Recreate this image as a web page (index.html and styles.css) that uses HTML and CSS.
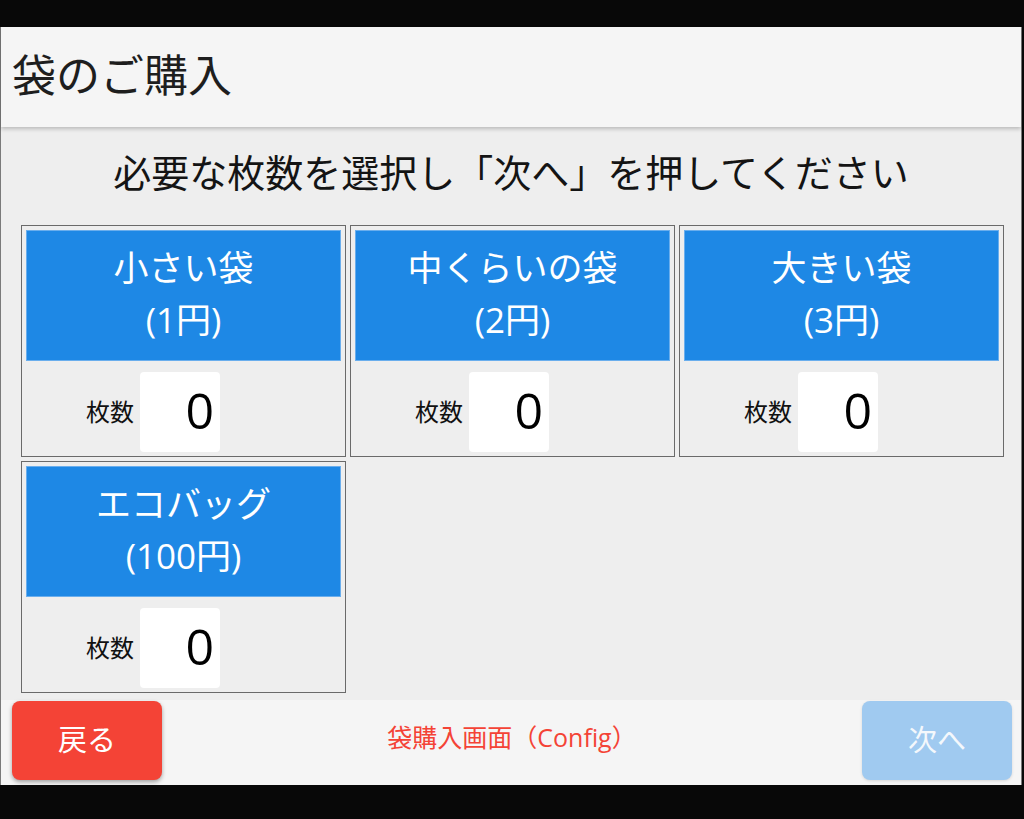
FILE: index.html
```html
<!DOCTYPE html>
<html lang="ja">
<head>
<meta charset="utf-8">
<title>袋のご購入</title>
<link rel="stylesheet" href="styles.css">
</head>
<body>
<div class="window">
  <header class="header">
    <h1 class="title">袋のご購入</h1>
  </header>
  <main class="main">
    <p class="instruction">必要な枚数を選択し「次へ」を押してください</p>
    <div class="grid">
      <section class="card">
        <div class="card-head">
          <span class="card-line">小さい袋</span>
          <span class="card-line">(1円)</span>
        </div>
        <div class="qty-row">
          <span class="qty-label">枚数</span>
          <span class="qty-box">0</span>
        </div>
      </section>
      <section class="card">
        <div class="card-head">
          <span class="card-line">中くらいの袋</span>
          <span class="card-line">(2円)</span>
        </div>
        <div class="qty-row">
          <span class="qty-label">枚数</span>
          <span class="qty-box">0</span>
        </div>
      </section>
      <section class="card">
        <div class="card-head">
          <span class="card-line">大きい袋</span>
          <span class="card-line">(3円)</span>
        </div>
        <div class="qty-row">
          <span class="qty-label">枚数</span>
          <span class="qty-box">0</span>
        </div>
      </section>
      <section class="card">
        <div class="card-head">
          <span class="card-line">エコバッグ</span>
          <span class="card-line">(100円)</span>
        </div>
        <div class="qty-row">
          <span class="qty-label">枚数</span>
          <span class="qty-box">0</span>
        </div>
      </section>
    </div>
  </main>
  <footer class="footer">
    <button class="btn btn-back" type="button">戻る</button>
    <span class="screen-name">袋購入画面（Config）</span>
    <button class="btn btn-next" type="button" disabled>次へ</button>
  </footer>
</div>
</body>
</html>
```

FILE: styles.css
```css
html, body {
  margin: 0;
  padding: 0;
}

body {
  background: #080808;
  height: 819px;
  overflow: hidden;
  font-family: "Open Sans", "Noto Sans CJK JP", sans-serif;
}

.window {
  margin-top: 27px;
  width: 1020px;
  height: 758px;
  border-left: 1px solid #7a7a7a;
  border-right: 1px solid #7a7a7a;
  background: #eeeeee;
  display: flex;
  flex-direction: column;
}

.header {
  height: 100px;
  flex: none;
  background: #f5f5f5;
  box-shadow: 0 2px 4px rgba(0, 0, 0, 0.22);
  position: relative;
  z-index: 1;
  display: flex;
  align-items: center;
}

.title {
  margin: 0 0 4px 11px;
  font-size: 44px;
  font-weight: 400;
  color: #1e1e1e;
  line-height: 56px;
}

.main {
  flex: 1;
  display: flex;
  flex-direction: column;
}

.instruction {
  margin: 20px 0 0;
  height: 50px;
  line-height: 50px;
  text-align: center;
  font-size: 38px;
  color: #141414;
}

.grid {
  margin-top: 28px;
  padding-left: 20px;
  display: grid;
  grid-template-columns: repeat(3, 325px);
  column-gap: 4px;
  row-gap: 4px;
}

.card {
  box-sizing: border-box;
  height: 232px;
  border: 1px solid #6a6a6a;
  padding: 4px;
  display: flex;
  flex-direction: column;
}

.card-head {
  box-sizing: border-box;
  height: 131px;
  background: #1e88e5;
  border: 1px solid #6aaeed;
  color: #ffffff;
  display: flex;
  flex-direction: column;
  align-items: center;
  justify-content: center;
  padding-bottom: 3px;
}

.card-line {
  font-size: 35px;
  line-height: 52px;
}

.qty-row {
  margin-top: 11px;
  padding-left: 60px;
  display: flex;
  align-items: center;
  gap: 6px;
}

.qty-label {
  font-size: 24px;
  color: #111;
  line-height: 30px;
}

.qty-box {
  box-sizing: border-box;
  width: 80px;
  height: 80px;
  background: #ffffff;
  border-radius: 4px;
  padding-right: 6px;
  text-align: right;
  font-size: 50px;
  line-height: 76px;
  color: #000;
}

.footer {
  height: 85px;
  flex: none;
  box-sizing: border-box;
  background: #f5f5f5;
  padding: 1px 9px 6px 11px;
  display: flex;
  align-items: flex-start;
  justify-content: space-between;
}

.btn {
  width: 150px;
  height: 79px;
  border: none;
  border-radius: 8px;
  font-family: "Open Sans", "Noto Sans CJK JP", sans-serif;
  font-size: 29px;
  color: #ffffff;
  padding: 0 0 6px;
}

.btn-back {
  background: #f44336;
  box-shadow: 0 2px 4px rgba(0, 0, 0, 0.35);
}

.btn-next {
  background: #a0caf0;
  color: #f4f8fc;
  box-shadow: 0 1px 3px rgba(0, 0, 0, 0.12);
}

.screen-name {
  align-self: center;
  margin-top: -8px;
  font-size: 25px;
  color: #f44336;
}
```
